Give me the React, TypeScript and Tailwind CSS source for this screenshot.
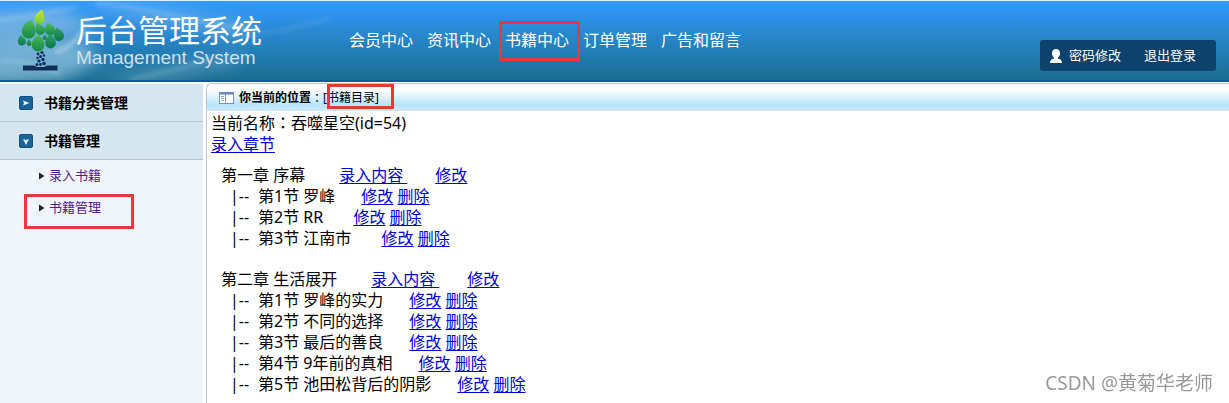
import React from 'react';

interface Section {
  no: number;
  title: string;
}

interface Chapter {
  name: string;
  sections: Section[];
}

const NAV = ['会员中心', '资讯中心', '书籍中心', '订单管理', '广告和留言'];

const CHAPTERS: Chapter[] = [
  {
    name: '第一章 序幕',
    sections: [
      { no: 1, title: '罗峰' },
      { no: 2, title: 'RR ' },
      { no: 3, title: '江南市 ' },
    ],
  },
  {
    name: '第二章 生活展开',
    sections: [
      { no: 1, title: '罗峰的实力' },
      { no: 2, title: '不同的选择' },
      { no: 3, title: '最后的善良' },
      { no: 4, title: '9年前的真相' },
      { no: 5, title: '池田松背后的阴影' },
    ],
  },
];

// drop-shaped leaves: tip x / y, bulb centre x / y, bulb radius, fill
const LEAVES: [number, number, number, number, number, string][] = [
  [42, 8.5, 39.3, 18, 5.2, 'url(#leafTop)'],
  [30.5, 18.5, 28.7, 30.5, 7, 'url(#leafA)'],
  [36.5, 22, 40.5, 29.3, 4.6, 'url(#leafA)'],
  [47, 21.5, 50.2, 29.5, 5, 'url(#leafA)'],
  [56.5, 26.5, 59, 35, 5, 'url(#leafB)'],
  [20.5, 34, 21.8, 40.5, 4, 'url(#leafB)'],
  [28.5, 38.5, 29, 42.5, 2.4, 'url(#leafB)'],
  [45, 33.5, 44.7, 37, 2, 'url(#leafB)'],
  [38.5, 33, 38, 44, 6.4, 'url(#leafA)'],
  [50, 33, 50.5, 42, 5.4, 'url(#leafB)'],
];

const leafPath = (tx: number, ty: number, cx: number, cy: number, r: number) => {
  const d = Math.hypot(cx - tx, cy - ty);
  const ux = (cx - tx) / d;
  const uy = (cy - ty) / d;
  const px = -uy * r;
  const py = ux * r;
  return [
    `M${tx} ${ty}`,
    `C${tx + ux * d * 0.3 + px * 0.5} ${ty + uy * d * 0.3 + py * 0.5}`,
    `${cx + px - ux * r * 0.7} ${cy + py - uy * r * 0.7} ${cx + px} ${cy + py}`,
    `A${r} ${r} 0 0 0 ${cx - px} ${cy - py}`,
    `C${cx - px - ux * r * 0.7} ${cy - py - uy * r * 0.7}`,
    `${tx + ux * d * 0.3 - px * 0.5} ${ty + uy * d * 0.3 - py * 0.5} ${tx} ${ty}Z`,
  ].join(' ');
};

const TreeLogo = () => (
  <svg width="48" height="62" viewBox="17 8 48 62" className="shrink-0" aria-hidden="true">
    <defs>
      <linearGradient id="leafTop" x1="0" y1="0" x2="0" y2="1">
        <stop offset="0" stopColor="#c4e83c" />
        <stop offset="1" stopColor="#7bcc30" />
      </linearGradient>
      <linearGradient id="leafA" x1="0" y1="0" x2="0" y2="1">
        <stop offset="0" stopColor="#4dbb5c" />
        <stop offset="1" stopColor="#158a45" />
      </linearGradient>
      <linearGradient id="leafB" x1="0" y1="0" x2="0" y2="1">
        <stop offset="0" stopColor="#2fa263" />
        <stop offset="1" stopColor="#0c774d" />
      </linearGradient>
    </defs>
    {LEAVES.map(([tx, ty, cx, cy, r, fill], i) => (
      <path key={i} fill={fill} d={leafPath(tx, ty, cx, cy, r)} />
    ))}
    <g fill="#0d2f5c">
      <circle cx="38" cy="53" r="1.4" />
      <circle cx="42" cy="51.500" r="1.600" />
      <circle cx="44" cy="54.500" r="1.200" />
      <circle cx="40.500" cy="55.500" r="1.500" />
      <circle cx="37.500" cy="57" r="1.200" />
      <circle cx="43" cy="58.500" r="1.700" />
      <circle cx="39" cy="60" r="1.600" />
      <circle cx="44" cy="62.500" r="1.700" />
      <circle cx="40.500" cy="63.500" r="1.400" />
      <circle cx="37" cy="63.500" r="1.500" />
      <path d="M23 64.500h11l3 1.500h7l3-1.500h10.500v5H23z" />
    </g>
  </svg>
);

const Clouds = () => (
  <svg className="absolute inset-0 h-full w-[340px]" viewBox="0 0 340 80" preserveAspectRatio="none" aria-hidden="true">
    <defs>
      <filter id="soft" x="-20%" y="-50%" width="140%" height="200%">
        <feGaussianBlur stdDeviation="7" />
      </filter>
      <filter id="thin" x="-20%" y="-50%" width="140%" height="200%">
        <feGaussianBlur stdDeviation="2" />
      </filter>
    </defs>
    <g filter="url(#soft)" fill="#a9d0ea">
      <path opacity=".5" d="M-20 10L60 8 100 26 60 38 -20 46z" />
      <path opacity=".6" d="M-20 48L30 38 85 42 100 62 60 80 -20 86z" />
      <path opacity=".3" d="M80 2L170 6 260 26 230 38 130 18z" />
      <path opacity=".3" d="M90 80L170 66 250 50 230 66 150 84z" />
    </g>
    <g filter="url(#thin)" stroke="#cfe6f5" fill="none" strokeWidth="3">
      <path opacity=".3" d="M-5 20C30 16 50 10 78 6M96 3C150 4 190 24 250 26" />
      <path opacity=".5" d="M56 52C68 48 74 42 84 30" strokeWidth="5" />
      <path opacity=".25" d="M0 62C20 58 40 66 60 74M130 80C160 72 180 70 210 58" />
      <path opacity=".15" d="M240 36C270 34 300 26 330 18" />
    </g>
  </svg>
);

const MarkBox = ({ className }: { className: string }) => (
  <span className={`pointer-events-none absolute border-3 border-[#e8383d] ${className}`} />
);

const Toggle = ({ open }: { open?: boolean }) => (
  <svg width="14" height="14" viewBox="0 0 14 14" aria-hidden="true">
    <rect x=".5" y=".5" width="13" height="13" rx="1.5" fill="#17639a" stroke="#10517f" />
    {open ? <path d="M4 5l3 1 3-1-3 6z" fill="#e4f4fb" /> : <path d="M4 4.500L10.500 7 4 9.500l1-2.500z" fill="#e4f4fb" />}
  </svg>
);

const SideGroup = ({ label, open }: { label: string; open?: boolean }) => (
  <button className="flex h-[38px] w-full items-center gap-[11px] border-b border-[#b5c6d3] bg-[#d5e6f0] pl-[19px] text-left text-sm font-bold text-black">
    <Toggle open={open} />
    {label}
  </button>
);

const SideLink = ({ label, marked }: { label: string; marked?: boolean }) => (
  <li className="relative flex h-8 items-center gap-1 pl-[39px] text-[13px]">
    <svg width="6" height="8" viewBox="0 0 6 8" aria-hidden="true">
      <path d="M0 0.500L5.500 4 0 7.500z" fill="#222" />
    </svg>
    <a href="#" className="text-[#551a8b]">{label}</a>
    {marked && <MarkBox className="left-6 top-[2px] h-[35px] w-[110px]" />}
  </li>
);

const TextLink = ({ children, className = '' }: { children: React.ReactNode; className?: string }) => (
  <a href="#" className={`text-[#0000d8] underline underline-offset-2 ${className}`}>{children}</a>
);

// colon that sits in the middle of its square
const Colon = () => <span className="font-['Noto_Sans_CJK_TC',sans-serif]" lang="zh-TW">：</span>;

const App: React.FC = () => {
  return (
    <div className="flex min-h-screen flex-col bg-white font-['Noto_Sans','Noto_Sans_CJK_SC',sans-serif] text-black">
      <header className="relative flex h-[82px] items-center border-t border-b-2 border-t-[#d9f1ff] border-b-[#0f5c99] bg-linear-to-b from-[#3399ff] to-[#1b6e90] pb-[2px] text-white">
        <Clouds />
        <div className="relative flex w-[342px] shrink-0 items-center gap-[11px] pl-[17px]">
          <TreeLogo />
          <div className="whitespace-nowrap">
            <div className="text-[31px] leading-9">后台管理系统</div>
            <div className="font-['Liberation_Sans',sans-serif] text-[19px] leading-5 text-[#d3e0ea]">Management System</div>
          </div>
        </div>
        <nav className="relative flex gap-[14px] pl-[7px] whitespace-nowrap">
          {NAV.map((item) => (
            <a key={item} href="#" className="relative leading-6">
              {item}
              {item === '书籍中心' && <MarkBox className="-left-[6px] -top-[7px] h-[40px] w-[81px]" />}
            </a>
          ))}
        </nav>
        <div className="relative mt-8 mr-[13px] ml-auto flex h-[31px] items-center rounded-[3px] bg-[#0c426b] pr-5 pl-[10px] text-[13px] whitespace-nowrap">
          <svg width="12" height="14" viewBox="0 0 12 14" className="mr-[7px]" fill="#fff" aria-hidden="true">
            <path d="M6 0C8.500 0 10 1.700 10 4.200C10 6 9.300 7.600 8 8.400L8 9.400C10.500 10 12 11.500 12 14H0C0 11.500 1.500 10 4 9.400V8.400C2.700 7.600 2 6 2 4.200C2 1.700 3.500 0 6 0Z" />
          </svg>
          <a href="#">密码修改</a>
          <a href="#" className="ml-[23px]">退出登录</a>
        </div>
      </header>

      <div className="flex flex-1 pt-px">
        <aside className="mr-[3px] w-[203px] shrink-0 bg-[#eff4f9] pt-px">
          <SideGroup label="书籍分类管理" />
          <SideGroup label="书籍管理" open />
          <ul>
            <SideLink label="录入书籍" />
            <SideLink label="书籍管理" marked />
          </ul>
        </aside>

        <main className="min-w-0 flex-1 rounded-tl-md border-t border-l border-[#b9c6d2]">
          <div className="flex h-[27px] items-center rounded-tl-md bg-linear-to-b from-white from-20% via-[#b9e4fc] via-75% to-[#cfe9fb] pl-3 text-xs">
            <svg width="15" height="12" viewBox="0 0 15 12" className="mr-[5px]" aria-hidden="true">
              <rect x=".5" y=".5" width="14" height="11" fill="#fff" stroke="#7d93b0" />
              <path d="M1 1.500h13" stroke="#5b83bd" strokeWidth="2" />
              <path d="M6.500 2v9" stroke="#7d93b0" />
              <path d="M2 4.500h3M2 6.500h3M2 8.500h3" stroke="#88a9d2" />
            </svg>
            <span className="font-bold">你当前的位置</span>
            <Colon />
            <span className="relative">
              [书籍目录]
              <MarkBox className="left-1 -top-[6px] h-[25px] w-[67px]" />
            </span>
          </div>

          <div className="px-1 pt-px leading-[21px]">
            <p>当前名称<Colon />吞噬星空(id=54)</p>
            <TextLink>录入章节</TextLink>
          </div>

          <div className="flex flex-col gap-5 pt-[10px] pl-[14px] leading-[21px] whitespace-pre">
            {CHAPTERS.map((chapter) => (
              <section key={chapter.name}>
                <h3>
                  {chapter.name}
                  <TextLink className="ml-[34px]">{'录入内容 '}</TextLink>
                  <TextLink className="ml-7">修改</TextLink>
                </h3>
                <ul className="pl-[9px]">
                  {chapter.sections.map((s) => (
                    <li key={s.no}>
                      <span className="inline-block w-7">|--</span>
                      第{s.no}节 {s.title}
                      <TextLink className="ml-[26px]">修改</TextLink> <TextLink>删除</TextLink>
                    </li>
                  ))}
                </ul>
              </section>
            ))}
          </div>
        </main>
      </div>

      <div className="fixed right-4 bottom-2 text-[19px] leading-6 text-[#999]">CSDN @黄菊华老师</div>
    </div>
  );
};

export default App;
